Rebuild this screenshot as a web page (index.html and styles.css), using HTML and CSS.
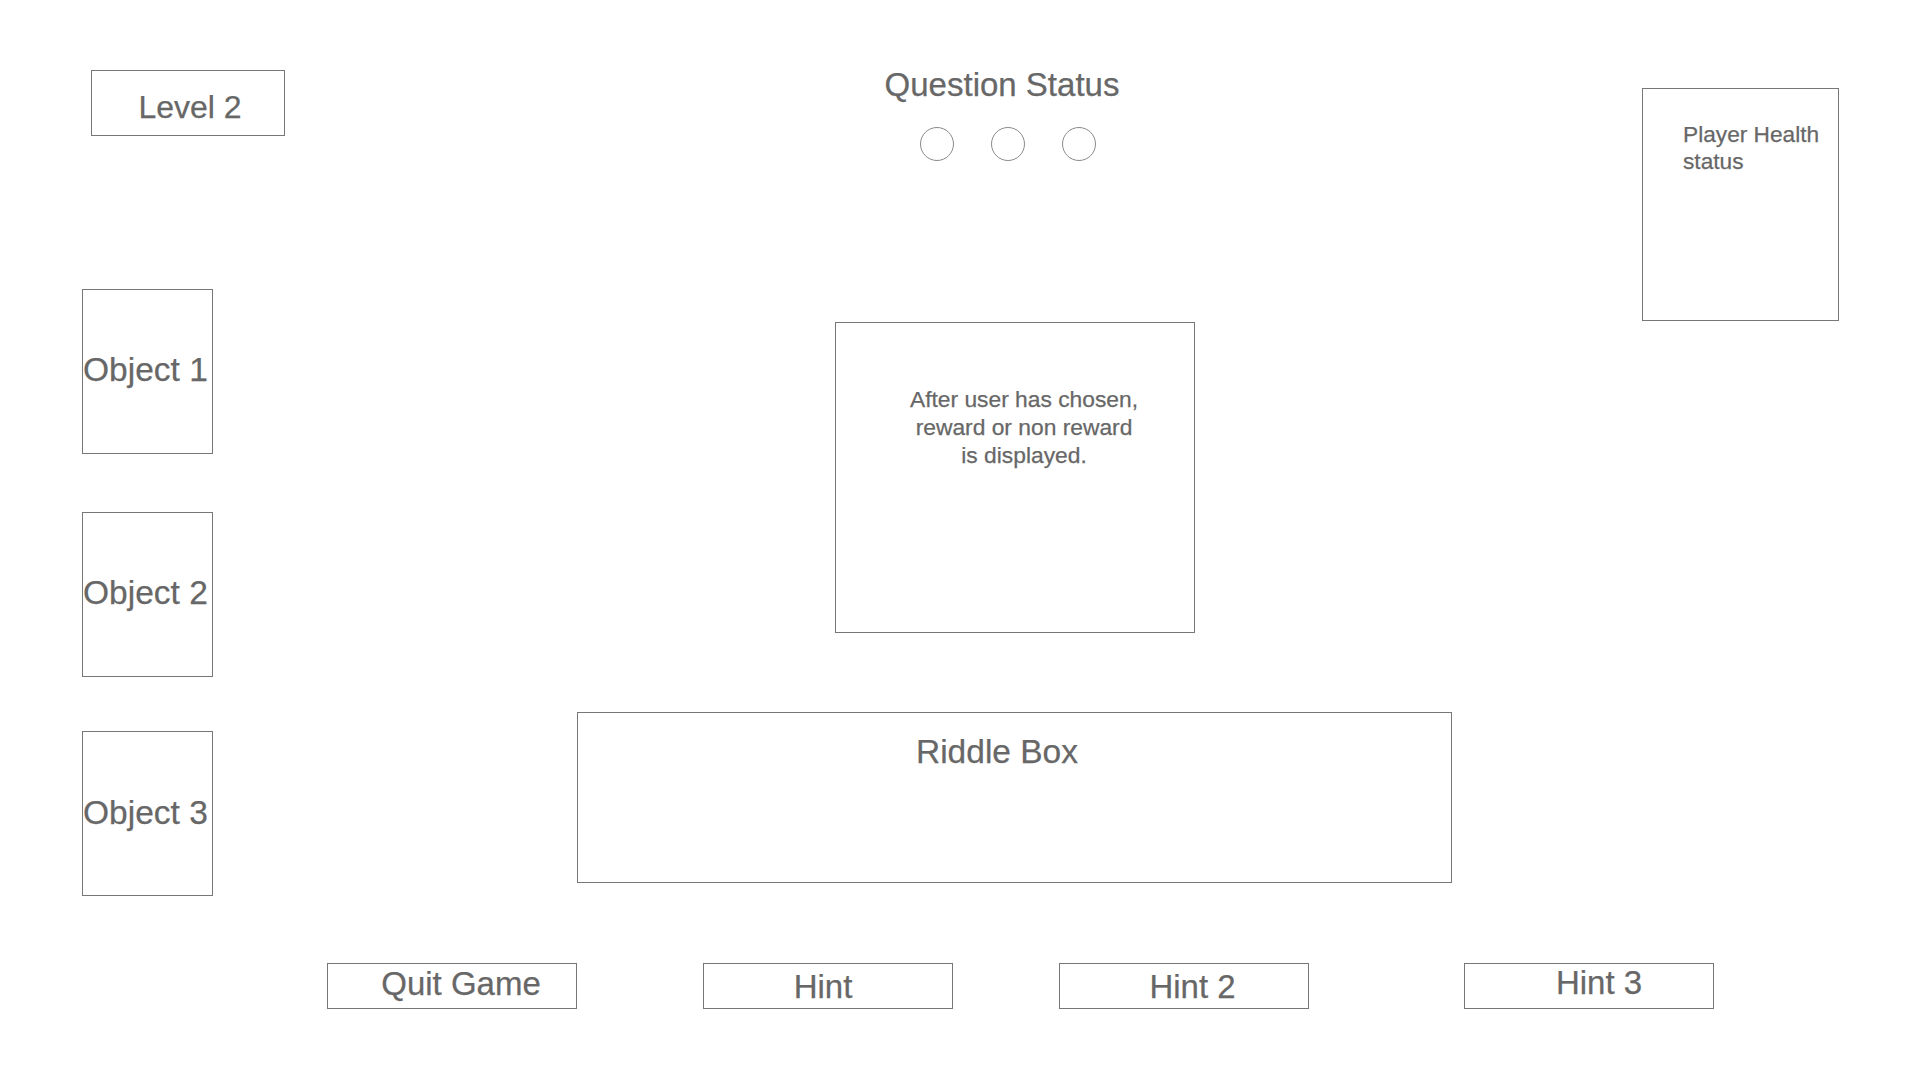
FILE: index.html
```html
<!DOCTYPE html>
<html lang="en">
<head>
<meta charset="utf-8">
<title>Riddle Game Wireframe</title>
<link rel="stylesheet" href="styles.css">
</head>
<body>
<div class="page">
  <div class="main">
    <div class="col-left">
      <div class="box level">Level 2</div>
      <div class="box object object-1">Object 1</div>
      <div class="box object object-2">Object 2</div>
      <div class="box object object-3">Object 3</div>
    </div>
    <div class="col-center">
      <div class="status">Question Status</div>
      <div class="dots">
        <span class="dot"></span>
        <span class="dot"></span>
        <span class="dot"></span>
      </div>
      <div class="box reward">After user has chosen,<br>reward or non reward<br>is displayed.</div>
      <div class="box riddle">Riddle Box</div>
    </div>
    <div class="col-right">
      <div class="box health">Player Health status</div>
    </div>
  </div>
  <div class="buttons">
    <div class="box btn btn-quit">Quit Game</div>
    <div class="box btn btn-hint1">Hint</div>
    <div class="box btn btn-hint2">Hint 2</div>
    <div class="box btn btn-hint3">Hint 3</div>
  </div>
</div>
</body>
</html>
```
FILE: styles.css
```css
* { box-sizing: border-box; }
html, body { margin: 0; padding: 0; background: #ffffff; }
body {
  font-family: "Liberation Sans", Arial, Helvetica, sans-serif;
  color: #676767;
  -webkit-text-stroke: 0.25px #676767;
}
.page {
  width: 1920px;
  height: 1080px;
  display: flex;
  flex-direction: column;
  overflow: hidden;
}
.box {
  border: 1px solid #777777;
  background: #ffffff;
}
.main {
  height: 963px;
  display: flex;
  align-items: flex-start;
  padding-left: 82px;
}

/* left column */
.col-left {
  width: 203px;
  display: flex;
  flex-direction: column;
  align-items: flex-start;
}
.level {
  margin-top: 70px;
  margin-left: 9px;
  width: 194px;
  height: 66px;
  font-size: 32px;
  line-height: 36px;
  text-align: center;
  padding-top: 18px;
  padding-left: 4px;
}
.object {
  width: 131px;
  height: 165px;
  font-size: 33.5px;
  line-height: 36px;
  white-space: nowrap;
  padding-top: 62px;
  padding-left: 0;
  overflow: visible;
}
.object-1 { margin-top: 153px; }
.object-2 { margin-top: 58px; }
.object-3 { margin-top: 54px; padding-top: 63px; }

/* center column */
.col-center {
  margin-left: 292px;
  width: 875px;
  display: flex;
  flex-direction: column;
  align-items: flex-start;
}
.status {
  margin-top: 68px;
  width: 100%;
  font-size: 33px;
  line-height: 34px;
  text-align: center;
  padding-right: 25px;
  white-space: nowrap;
}
.dots {
  margin-top: 25px;
  width: 100%;
  display: flex;
  justify-content: center;
  gap: 37px;
  padding-right: 13px;
}
.dot {
  width: 34px;
  height: 34px;
  border: 1px solid #8a8a8a;
  border-radius: 50%;
}
.reward {
  margin-top: 161px;
  margin-left: 258px;
  width: 360px;
  height: 311px;
  font-size: 22.8px;
  line-height: 28px;
  text-align: center;
  padding-top: 62px;
  padding-left: 18px;
}
.riddle {
  margin-top: 79px;
  width: 875px;
  height: 171px;
  font-size: 33.5px;
  line-height: 38px;
  text-align: center;
  padding-top: 20px;
  padding-right: 35px;
}

/* right column */
.col-right {
  margin-left: 190px;
}
.health {
  margin-top: 88px;
  width: 197px;
  height: 233px;
  font-size: 22.7px;
  line-height: 27px;
  padding-top: 32px;
  padding-left: 40px;
  padding-right: 4px;
}

/* bottom buttons */
.buttons {
  display: flex;
  align-items: flex-start;
  padding-left: 327px;
}
.btn {
  width: 250px;
  height: 46px;
  font-size: 33px;
  line-height: 36px;
  text-align: center;
  white-space: nowrap;
}
.btn-quit { padding-top: 2px; padding-left: 18px; }
.btn-hint1 { margin-left: 126px; padding-top: 5px; padding-right: 10px; }
.btn-hint2 { margin-left: 106px; padding-top: 5px; padding-left: 17px; }
.btn-hint3 { margin-left: 155px; padding-top: 1px; padding-left: 20px; }
```
